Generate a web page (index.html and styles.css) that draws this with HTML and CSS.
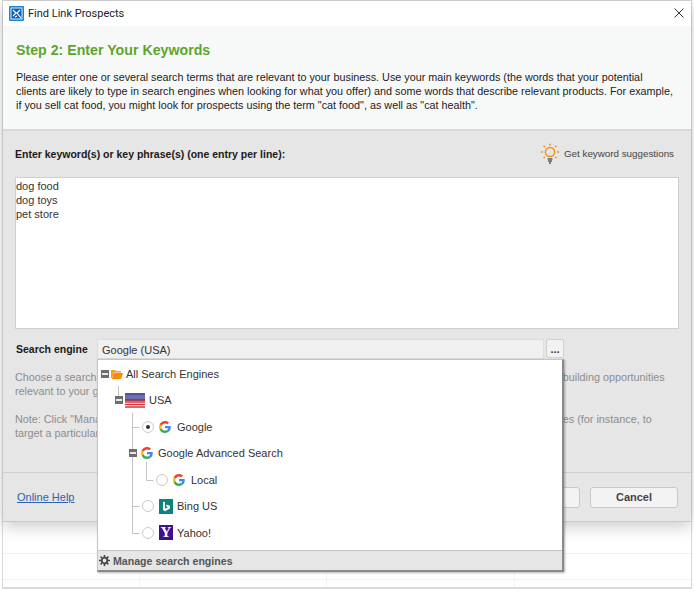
FILE: index.html
```html
<!DOCTYPE html>
<html lang="en">
<head>
    <meta charset="UTF-8">
    <title>Find Link Prospects</title>
    <link rel="stylesheet" href="styles.css">
</head>
<body>
    <svg class="defs" width="0" height="0">
        <symbol id="g-logo" viewBox="0 0 48 48">
            <path fill="#EA4335" d="M24 9.5c3.54 0 6.71 1.22 9.21 3.6l6.85-6.85C35.9 2.38 30.47 0 24 0 14.62 0 6.51 5.38 2.56 13.22l7.98 6.19C12.43 13.72 17.74 9.5 24 9.5z"/>
            <path fill="#4285F4" d="M46.98 24.55c0-1.57-.15-3.09-.38-4.55H24v9.02h12.94c-.58 2.96-2.26 5.48-4.78 7.18l7.73 6c4.51-4.18 7.09-10.36 7.09-17.65z"/>
            <path fill="#FBBC05" d="M10.53 28.59c-.48-1.45-.76-2.99-.76-4.59s.27-3.14.76-4.59l-7.98-6.19C.92 16.46 0 20.12 0 24c0 3.88.92 7.54 2.56 10.78l7.97-6.19z"/>
            <path fill="#34A853" d="M24 48c6.48 0 11.93-2.13 15.89-5.81l-7.73-6c-2.15 1.45-4.92 2.3-8.16 2.3-6.26 0-11.57-4.22-13.47-9.91l-7.98 6.19C6.51 42.62 14.62 48 24 48z"/>
        </symbol>
    </svg>

    <div class="frame">
        <div class="dialog">
            <div class="titlebar">
                <svg class="app-icon" width="15" height="15" viewBox="0 0 15 15">
                    <rect width="15" height="15" rx="1" fill="#1b82d6"/>
                    <rect x="2" y="2" width="11" height="11" fill="#0f5fa8" stroke="#d7ecfb" stroke-width="1"/>
                    <path d="M4 4l3 3-3 3M11 4L8 7l4 5M6 11l2-1" fill="none" stroke="#fff" stroke-width="1.2"/>
                </svg>
                <span class="title">Find Link Prospects</span>
                <svg class="close" width="10" height="10" viewBox="0 0 10 10">
                    <path d="M.5.5l9 9M9.5.5l-9 9" stroke="#333" stroke-width="1" fill="none"/>
                </svg>
            </div>

            <div class="intro">
                <h1>Step 2: Enter Your Keywords</h1>
                <p>Please enter one or several search terms that are relevant to your business. Use your main keywords (the words that your potential<br>
                clients are likely to type in search engines when looking for what you offer) and some words that describe relevant products. For example,<br>
                if you sell cat food, you might look for prospects using the term "cat food", as well as "cat health".</p>
            </div>

            <div class="main">
                <div class="kw-head">
                    <label>Enter keyword(s) or key phrase(s) (one entry per line):</label>
                    <a class="suggest">
                        <svg width="20" height="21" viewBox="0 0 20 21">
                            <circle cx="10" cy="9" r="4.6" fill="none" stroke="#f0921e" stroke-width="1.5"/>
                            <path d="M10 .8v1.8M3.6 2.8l1.2 1.2M16.4 2.8l-1.2 1.2M1 9h1.9M17.1 9H19M3.6 15l1.2-1.1M16.4 15l-1.2-1.1" stroke="#f0921e" stroke-width="1.5"/>
                            <path d="M7.6 16h4.8M8 18h4M9 20h2" stroke="#5c5c5c" stroke-width="1.3"/>
                        </svg>
                        Get keyword suggestions
                    </a>
                </div>
                <div class="keywords">dog food<br>dog toys<br>pet store</div>
                <div class="engine-row">
                    <label>Search engine</label>
                    <div class="engine-value">Google (USA)</div>
                    <div class="engine-more">...</div>
                </div>
                <p class="hint">Choose a search engine that you would like to use to look for prospects. We will search it for sites that provide link building opportunities<br>
                relevant to your goals.</p>
                <p class="hint">Note: Click "Manage search engines" to add more search engines or to change the properties of your search engines (for instance, to<br>
                target a particular country).</p>
            </div>

            <div class="footer">
                <a class="help">Online Help</a>
                <div class="buttons">
                    <div class="btn">Next</div>
                    <div class="btn">Cancel</div>
                </div>
            </div>

            <div class="dropdown">
                <div class="tree">
                    <svg class="tree-lines" width="100" height="190" viewBox="0 0 100 190">
                        <path d="M20.5 26v10M34.5 53v120.500M34.500 67.500h7M34.500 146.500h7M34.500 173.500h7M48.500 102v18.500h7" fill="none" stroke="#c4c4c4" stroke-width="1"/>
                    </svg>
                    <div class="node lvl0">
                        <span class="toggle"></span>
                        <svg class="folder" width="12" height="10" viewBox="0 0 12 10">
                            <path d="M0 1h4l1 1h5v1.500H3L1 9H0z" fill="#f7a11f"/>
                            <path d="M3 4h9l-2 6H.8z" fill="#f58a0b"/>
                        </svg>
                        <span>All Search Engines</span>
                    </div>
                    <div class="node lvl1">
                        <span class="toggle"></span>
                        <svg class="flag" width="20" height="15" viewBox="0 0 20 15">
                            <rect width="20" height="15" fill="#fff"/>
                            <path d="M0 9h20M0 11.500h20M0 14h20" stroke="#d8343c" stroke-width="1.400"/>
                            <rect width="20" height="8" fill="#4a4f96"/>
                            <path d="M0 .5h20M0 7.500h20" stroke="#d8343c" stroke-width="1" opacity=".6"/>
                            <path d="M0 3h20M0 5h20" stroke="#8b90c4" stroke-width="1"/>
                        </svg>
                        <span>USA</span>
                    </div>
                    <div class="node lvl2">
                        <span class="radio on"></span>
                        <svg class="logo" width="12" height="12"><use href="#g-logo"/></svg>
                        <span>Google</span>
                    </div>
                    <div class="node lvl2b">
                        <span class="toggle"></span>
                        <svg class="logo" width="12" height="12"><use href="#g-logo"/></svg>
                        <span>Google Advanced Search</span>
                    </div>
                    <div class="node lvl3">
                        <span class="radio"></span>
                        <svg class="logo" width="12" height="12"><use href="#g-logo"/></svg>
                        <span>Local</span>
                    </div>
                    <div class="node lvl2">
                        <span class="radio"></span>
                        <svg class="badge" width="14" height="15" viewBox="0 0 14 15">
                            <rect width="14" height="15" fill="#0a8378"/>
                            <path d="M4 2.500l2 .7v6.300l3-1.200-1.400-.8-.8-2L11 6.800v2.700l-5 2.800-2-1.200z" fill="#fff"/>
                        </svg>
                        <span>Bing US</span>
                    </div>
                    <div class="node lvl2">
                        <span class="radio"></span>
                        <span class="yahoo">Y</span>
                        <span>Yahoo!</span>
                    </div>
                </div>
                <div class="manage">
                    <svg width="11" height="11" viewBox="0 0 11 11">
                        <circle cx="5.500" cy="5.500" r="2.800" fill="none" stroke="#444" stroke-width="1.800"/>
                        <path d="M5.500 0v2M5.500 9v2M0 5.500h2M9 5.500h2M1.600 1.600L3 3M8 8l1.400 1.400M9.400 1.600L8 3M3 8L1.600 9.400" stroke="#444" stroke-width="1.600"/>
                    </svg>
                    Manage search engines
                </div>
            </div>
        </div>

        <div class="backdrop">
            <div></div><div></div><div></div><div></div>
            <div></div><div></div><div></div><div></div>
            <div></div><div></div><div></div><div></div>
        </div>
    </div>
</body>
</html>
```

FILE: styles.css
```css
html, body {
    margin: 0;
    padding: 0;
    background-color: white;
}
body {
    width: 694px;
    height: 592px;
    overflow: hidden;
    font-family: "Liberation Sans", Arial, sans-serif;
    font-size: 11px;
    color: #222;
}
.defs {
    position: absolute;
}
.frame {
    width: 688px;
    margin-left: 2px;
    border: 1px solid #d9d9d9;
    border-bottom: 2px solid #d9d9d9;
    box-sizing: content-box;
}
.dialog {
    position: relative;
    z-index: 1;
    background-color: white;
    box-shadow: 0 4px 16px rgba(0,0,0,0.22);
}
.titlebar {
    display: flex;
    align-items: center;
    height: 25px;
    padding-left: 6px;
    padding-right: 7px;
    padding-bottom: 1px;
    box-sizing: border-box;
}
.app-icon {
    margin-right: 4px;
}
.title {
    flex: 1;
    font-family: Roboto, sans-serif;
    font-size: 11px;
    color: #222;
}
.intro {
    height: 105px;
    padding: 16px 13px 0;
    box-sizing: border-box;
    background-color: #f7f9f9;
    border-bottom: 2px solid #d9d9d9;
}
.intro h1 {
    margin: 0 0 11px;
    font-size: 14.2px;
    line-height: 17px;
    color: #5fa52d;
}
.intro p {
    margin: 0;
    font-size: 10.8px;
    line-height: 14px;
    white-space: nowrap;
}
.main {
    height: 342px;
    padding: 0 12px;
    box-sizing: border-box;
    background-color: #e6e6e6;
    border-bottom: 1px solid #d0d0d0;
}
.main label {
    font-size: 10.5px;
    font-weight: bold;
    color: #1a1a1a;
}
.kw-head {
    display: flex;
    align-items: center;
    justify-content: space-between;
    height: 46px;
    padding-right: 5px;
}
.suggest {
    display: flex;
    align-items: center;
    gap: 4px;
    padding-bottom: 2px;
    font-size: 9.8px;
    color: #444;
}
.keywords {
    height: 152px;
    padding: 1px 0;
    box-sizing: border-box;
    background-color: white;
    border: 1px solid #cfcfcf;
    line-height: 14px;
    color: #333;
}
.engine-row {
    display: flex;
    align-items: flex-start;
    margin-top: 10px;
    height: 20px;
}
.main .engine-row label {
    width: 81px;
    padding-left: 1px;
    line-height: 21px;
}
.engine-value {
    width: 447px;
    height: 20px;
    line-height: 20px;
    padding-left: 4px;
    box-sizing: border-box;
    background-color: #f0f0f0;
    border: 1px solid #dcdcdc;
    color: #333;
}
.engine-more {
    width: 18px;
    height: 19px;
    margin-left: 2px;
    box-sizing: border-box;
    background-color: #f2f2f2;
    border: 1px solid #d0d0d0;
    border-radius: 2px;
    text-align: center;
    line-height: 18px;
    font-weight: bold;
    color: #333;
}
.hint {
    margin: 11px 0 14px;
    font-size: 10.8px;
    line-height: 14px;
    color: #8c8c8c;
    white-space: nowrap;
}
.footer {
    display: flex;
    align-items: center;
    justify-content: space-between;
    height: 49px;
    padding: 0 13px 0 14px;
    box-sizing: border-box;
    background-color: #e6e6e6;
    border-bottom: 1px solid #a9d4e8;
}
.help {
    color: #2f62ae;
    text-decoration: underline;
}
.buttons {
    display: flex;
    gap: 10px;
}
.btn {
    width: 88px;
    height: 21px;
    line-height: 19px;
    box-sizing: border-box;
    text-align: center;
    font-weight: bold;
    color: #444;
    background-color: #f3f3f3;
    border: 1px solid #c8c8c8;
    border-radius: 3px;
}

/* dropdown tree lies over the dialog */
.dropdown {
    position: absolute;
    left: 94px;
    top: 358px;
    width: 467px;
    height: 213px;
    display: flex;
    flex-direction: column;
    box-sizing: border-box;
    background-color: white;
    border: 1px solid #c4c4c4;
    border-right: 2px solid #8a8a8a;
    border-bottom: 2px solid #8a8a8a;
    box-shadow: 1px 1px 2px rgba(0,0,0,0.3);
}
.tree {
    position: relative;
    flex: 1;
    padding-top: 0.5px;
    color: #333;
}
.tree-lines {
    position: absolute;
    left: 0;
    top: 0;
}
.node {
    position: relative;
    display: flex;
    align-items: center;
    height: 26.5px;
}
.lvl0 { padding-left: 3px; }
.lvl1 { padding-left: 17px; }
.lvl2 { padding-left: 44px; }
.lvl2b { padding-left: 31px; }
.lvl3 { padding-left: 58px; }
.toggle {
    position: relative;
    width: 8px;
    height: 8px;
    flex: none;
    background-color: #6e6e6e;
    margin-right: 2px;
}
.toggle::after {
    content: "";
    position: absolute;
    left: 1px;
    right: 1px;
    top: 3px;
    height: 2px;
    background-color: #e8e8e8;
}
.folder { margin-right: 3px; }
.flag { margin-left: 0; margin-right: 4px; }
.radio {
    position: relative;
    width: 10px;
    height: 10px;
    flex: none;
    background-color: white;
    border: 1px solid #cccccc;
    border-radius: 50%;
    margin-right: 5px;
}
.radio.on::after {
    content: "";
    position: absolute;
    left: 3px;
    top: 3px;
    width: 4px;
    height: 4px;
    border-radius: 50%;
    background-color: #333;
}
.logo { margin-right: 6px; }
.lvl2b .logo { margin-left: 2px; margin-right: 5px; }
.badge { margin-right: 4px; }
.yahoo {
    width: 14px;
    height: 15px;
    margin-right: 4px;
    flex: none;
    background-color: #40108c;
    color: white;
    font-family: "Liberation Serif", serif;
    font-weight: bold;
    font-size: 15px;
    line-height: 15px;
    text-align: center;
}
.manage {
    display: flex;
    align-items: center;
    gap: 3px;
    height: 20px;
    padding-left: 1px;
    box-sizing: border-box;
    background-color: #e6e6e6;
    border-top: 1px solid #c4c4c4;
    font-size: 10.6px;
    font-weight: bold;
    color: #555;
}

/* table behind the dialog */
.backdrop {
    display: grid;
    grid-template-columns: 137px 187px 188px 176px;
    grid-template-rows: 32px 26px 7px;
    background-color: white;
}
.backdrop div {
    border-bottom: 1px solid #f0f0f0;
    border-right: 1px solid #f4f4f4;
    box-sizing: border-box;
}
.backdrop div:nth-child(4n) {
    border-right: none;
}
.backdrop div:nth-last-child(-n+4) {
    border-bottom: none;
}
```
